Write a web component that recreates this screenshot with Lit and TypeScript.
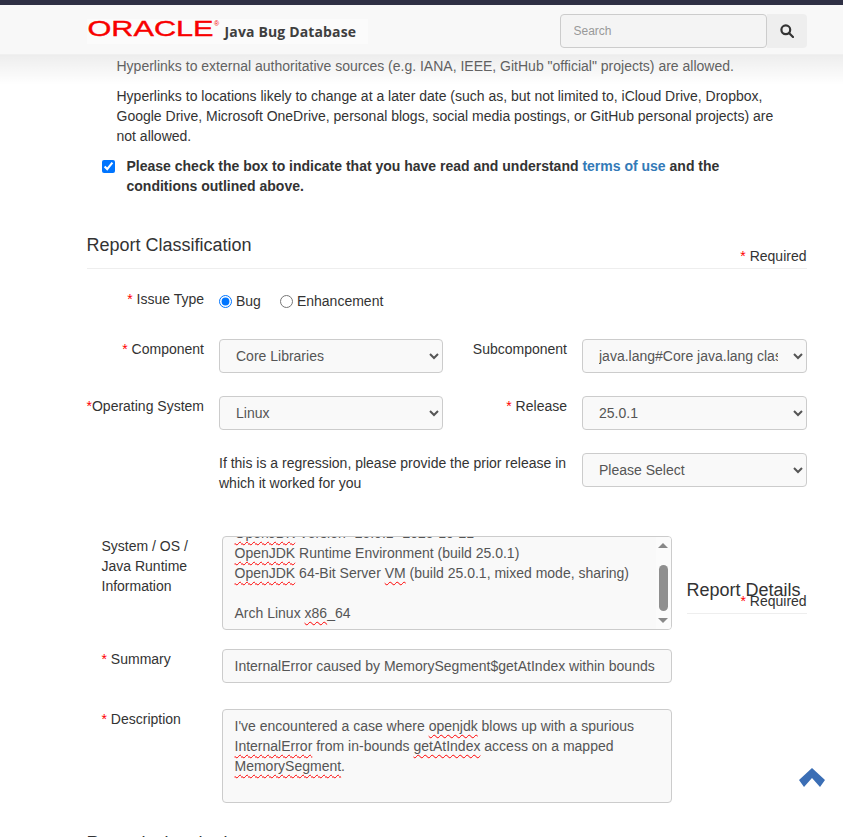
import { LitElement, html, css } from 'lit';
import { customElement } from 'lit/decorators.js';

@customElement('app-root')
export class AppRoot extends LitElement {
  static styles = css`
    :host {
      display: block;
      height: 837px;
      overflow: hidden;
      background: #fff;
      color: #333;
      font-family: 'Liberation Sans', Arial, sans-serif;
      font-size: 14px;
      line-height: 20px;
    }
    /* header */
    .topbar {
      height: 5px;
      background: #2f3044;
    }
    .navbar {
      height: 50px;
      box-sizing: border-box;
      padding: 9px 36.5px 0 86.5px;
      display: flex;
      justify-content: space-between;
      background: #f8f8f8;
      border-bottom: 1px solid #f0f0f0;
    }
    .brand {
      display: flex;
      align-items: flex-start;
      gap: 5px;
      height: 25px;
      margin-top: 5px;
      padding-right: 12px;
      background: #fbfbfb;
    }
    .oracle {
      display: block;
    }
    .oracle text {
      fill: #f80000;
      font-family: 'Liberation Sans', Arial, sans-serif;
    }
    .oracle .word {
      stroke: #f80000;
      stroke-width: 0.4px;
    }
    .app-name {
      font-family: 'Open Sans', sans-serif;
      font-size: 14px;
      font-weight: 700;
      letter-spacing: 0.15px;
      color: #3f3f3f;
      margin-top: 3px;
    }
    .search {
      display: flex;
    }
    .search input {
      width: 207px;
      height: 34px;
      box-sizing: border-box;
      padding: 6px 13px;
      border: 1px solid #ccc;
      border-radius: 4px;
      background: #f4f4f4;
      font: 12px 'Liberation Sans', Arial, sans-serif;
    }
    .search input::placeholder {
      color: #999;
    }
    .search-btn {
      width: 40px;
      height: 34px;
      display: flex;
      align-items: center;
      justify-content: center;
      background: #eee;
      border-radius: 0 4px 4px 0;
    }
    .shade {
      height: 30px;
      margin-bottom: -30px;
      position: relative;
      background: linear-gradient(rgba(0, 0, 0, 0.07), rgba(0, 0, 0, 0));
      pointer-events: none;
    }
    /* page */
    .content {
      padding: 1px 36.5px 0 86.5px;
    }
    .intro {
      padding: 0 30px;
      margin: 0;
    }
    .intro + .intro {
      margin-top: 10px;
    }
    .faded {
      color: #666;
    }
    .agree {
      display: flex;
      gap: 12px;
      margin: 10px 30px 0 15px;
      font-weight: 700;
    }
    .agree input {
      width: 13px;
      height: 13px;
      margin: 4px 0 0;
      flex: none;
      accent-color: #0075ff;
    }
    .agree a {
      color: #337ab7;
      text-decoration: none;
    }
    .section-head {
      display: flex;
      justify-content: space-between;
      align-items: flex-end;
      height: 72px;
      border-bottom: 1px solid #eee;
      margin-bottom: 20px;
    }
    h2 {
      margin: 0;
      font-size: 18px;
      font-weight: 400;
      line-height: 20px;
    }
    .section-head h2 {
      margin-bottom: 13px;
    }
    .required {
      margin-bottom: 2px;
    }
    .star {
      color: #f00;
    }
    /* classification form */
    .form-grid {
      display: grid;
      grid-template-columns: 117.5px 224px 109px 224.5px;
      column-gap: 15px;
      row-gap: 23px;
      align-items: start;
    }
    .label {
      text-align: right;
      white-space: nowrap;
    }
    .radios {
      grid-column: 2 / 5;
      display: flex;
      gap: 19px;
      margin: 2px 0 5px;
    }
    .radios label {
      display: flex;
      align-items: center;
      gap: 4px;
    }
    .radios input {
      width: 13px;
      height: 13px;
      margin: 0;
      accent-color: #0075ff;
    }
    select {
      width: 100%;
      height: 34px;
      box-sizing: border-box;
      padding: 6px 12px;
      border: 1px solid #ccc;
      border-radius: 4px;
      background-color: #f9f9f9;
      color: #555;
      font: 14px 'Liberation Sans', Arial, sans-serif;
    }
    .regression {
      grid-column: 2 / 4;
    }
    /* details */
    .details {
      display: grid;
      grid-template-columns: 120px 450px 135px;
      column-gap: 15px;
      margin-top: 43px;
      align-items: start;
    }
    .details .label {
      text-align: left;
      padding-left: 15px;
    }
    .sys-label {
      white-space: normal;
    }
    .box {
      box-sizing: border-box;
      border: 1px solid #ccc;
      border-radius: 4px;
      background: #f9f9f9;
      color: #555;
      overflow: hidden;
      padding: 6px 12px;
    }
    .sys {
      height: 94px;
      padding: 0 0 0 12px;
      display: flex;
    }
    .sys-text {
      flex: 1;
      margin-top: -14px;
    }
    .sb {
      width: 15px;
      display: flex;
      flex-direction: column;
      align-items: center;
      padding: 6px 0;
      box-sizing: border-box;
      justify-content: space-between;
      background: #fbfbfb;
    }
    .sb-thumb {
      width: 9px;
      height: 46px;
      border-radius: 5px;
      background: #8f8f8f;
      margin-top: 10px;
    }
    .up {
      border: 5px solid transparent;
      border-top: 0;
      border-bottom: 5px solid #888;
    }
    .down {
      border: 5px solid transparent;
      border-bottom: 0;
      border-top: 5px solid #888;
    }
    .wavy {
      text-decoration: underline wavy #f00 1.4px;
      text-decoration-skip-ink: none;
      text-underline-offset: 3px;
    }
    .aside {
      margin-top: 44px;
      border-bottom: 1px solid #eee;
      height: 33px;
      width: 120px;
      white-space: nowrap;
    }
    .aside .required {
      margin: -9px 0 0 54px;
    }
    .summary {
      height: 34px;
      margin-top: 19px;
      white-space: nowrap;
    }
    .summary-label {
      margin-top: 19px;
    }
    .desc-label {
      margin-top: 26px;
    }
    .desc {
      height: 94px;
      margin-top: 26px;
    }
    .next {
      margin-top: 30px;
    }
    .top-arrow {
      position: fixed;
      left: 799px;
      top: 768px;
      display: block;
    }
  `;

  protected render() {
    return html`
      <div class="topbar"></div>
      <div class="navbar">
        <div class="brand">
          <svg class="oracle" width="133" height="25" viewBox="0 0 133 25">
            <text class="word" x="0.5" y="17" font-size="22" textLength="126" lengthAdjust="spacingAndGlyphs">ORACLE</text>
            <text x="127" y="7" font-size="7">®</text>
          </svg>
          <span class="app-name">Java Bug Database</span>
        </div>
        <div class="search">
          <input placeholder="Search" />
          <div class="search-btn">
            <svg width="14" height="14" viewBox="0 0 14 14" fill="none" stroke="#333" stroke-width="2.2">
              <circle cx="5.8" cy="5.8" r="4.4"></circle>
              <path d="M9 9l4 4" stroke-linecap="round"></path>
            </svg>
          </div>
        </div>
      </div>
      <div class="shade"></div>
      <div class="content">
        <p class="intro faded">Hyperlinks to external authoritative sources (e.g. IANA, IEEE, GitHub "official" projects) are allowed.</p>
        <p class="intro">Hyperlinks to locations likely to change at a later date (such as, but not limited to, iCloud Drive, Dropbox, Google Drive, Microsoft OneDrive, personal blogs, social media postings, or GitHub personal projects) are not allowed.</p>
        <label class="agree">
          <input type="checkbox" checked />
          <span>Please check the box to indicate that you have read and understand <a href="#">terms of use</a> and the conditions outlined above.</span>
        </label>

        <div class="section-head">
          <h2>Report Classification</h2>
          <div class="required"><span class="star">*</span> Required</div>
        </div>

        <div class="form-grid">
          <div class="label"><span class="star">*</span> Issue Type</div>
          <div class="radios">
            <label><input type="radio" name="t" checked />Bug</label>
            <label><input type="radio" name="t" />Enhancement</label>
          </div>
          <div class="label"><span class="star">*</span> Component</div>
          <select><option>Core Libraries</option></select>
          <div class="label">Subcomponent</div>
          <select><option>java.lang#Core java.lang classes</option></select>
          <div class="label"><span class="star">*</span>Operating System</div>
          <select><option>Linux</option></select>
          <div class="label"><span class="star">*</span> Release</div>
          <select><option>25.0.1</option></select>
          <div></div>
          <div class="regression">If this is a regression, please provide the prior release in which it worked for you</div>
          <select><option>Please Select</option></select>
        </div>

        <div class="details">
          <div class="label sys-label">System / OS / Java Runtime Information</div>
          <div class="box sys">
            <div class="sys-text">
              <div><span class="wavy">OpenJDK</span> Version "25.0.1" 2025-10-21</div>
              <div><span class="wavy">OpenJDK</span> Runtime Environment (build 25.0.1)</div>
              <div><span class="wavy">OpenJDK</span> 64-Bit Server <span class="wavy">VM</span> (build 25.0.1, mixed mode, sharing)</div>
              <div>&nbsp;</div>
              <div>Arch Linux <span class="wavy">x86</span>_64</div>
            </div>
            <div class="sb">
              <div class="up"></div>
              <div class="sb-thumb"></div>
              <div class="down"></div>
            </div>
          </div>
          <div class="aside">
            <h2>Report Details</h2>
            <div class="required"><span class="star">*</span> Required</div>
          </div>

          <div class="label summary-label"><span class="star">*</span> Summary</div>
          <div class="box summary">InternalError caused by MemorySegment$getAtIndex within bounds</div>
          <div></div>

          <div class="label desc-label"><span class="star">*</span> Description</div>
          <div class="box desc">
            <div>I've encountered a case where <span class="wavy">openjdk</span> blows up with a spurious</div>
            <div><span class="wavy">InternalError</span> from in-bounds <span class="wavy">getAtIndex</span> access on a mapped</div>
            <div><span class="wavy">MemorySegment</span>.</div>
          </div>
          <div></div>
        </div>
        <h2 class="next">Reproducing the issue</h2>
      </div>
      <svg class="top-arrow" width="26" height="19" viewBox="0 0 26 19">
        <path d="M13 0L26 12 21 19 13 10 5 19 0 12z" fill="#3b6eb5"></path>
      </svg>
    `;
  }
}
